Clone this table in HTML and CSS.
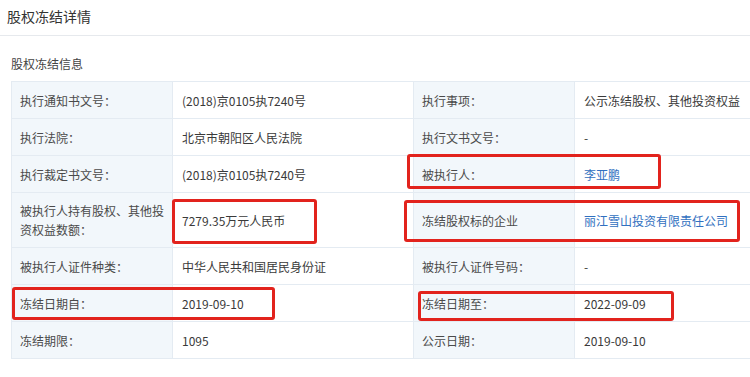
FILE: index.html
```html
<!DOCTYPE html>
<html lang="zh-CN">
<head>
<meta charset="utf-8">
<title>股权冻结详情</title>
<link rel="stylesheet" href="styles.css">
</head>
<body>
<div class="page">
  <header class="head">股权冻结详情</header>
  <h2 class="section">股权冻结信息</h2>
  <div class="table-wrap">
    <table class="info">
      <colgroup>
        <col class="c-label"><col class="c-value"><col class="c-label"><col class="c-value2">
      </colgroup>
      <tr>
        <th>执行通知书文号：</th><td>(2018)京0105执7240号</td>
        <th>执行事项：</th><td>公示冻结股权、其他投资权益</td>
      </tr>
      <tr>
        <th>执行法院：</th><td>北京市朝阳区人民法院</td>
        <th>执行文书文号：</th><td>-</td>
      </tr>
      <tr>
        <th>执行裁定书文号：</th><td>(2018)京0105执7240号</td>
        <th>被执行人：</th><td><a class="link">李亚鹏</a></td>
      </tr>
      <tr class="tall">
        <th>被执行人持有股权、其他投资权益数额：</th><td>7279.35万元人民币</td>
        <th>冻结股权标的企业</th><td><a class="link">丽江雪山投资有限责任公司</a></td>
      </tr>
      <tr>
        <th>被执行人证件种类：</th><td>中华人民共和国居民身份证</td>
        <th>被执行人证件号码：</th><td>-</td>
      </tr>
      <tr>
        <th>冻结日期自：</th><td>2019-09-10</td>
        <th>冻结日期至：</th><td>2022-09-09</td>
      </tr>
      <tr>
        <th>冻结期限：</th><td>1095</td>
        <th>公示日期：</th><td>2019-09-10</td>
      </tr>
    </table>
    <span class="mark mark-person"></span>
    <span class="mark mark-amount"></span>
    <span class="mark mark-company"></span>
    <span class="mark mark-from"></span>
    <span class="mark mark-to"></span>
  </div>
</div>
</body>
</html>
```
FILE: styles.css
```css
html, body {
  margin: 0;
  padding: 0;
  background: #ffffff;
  overflow: hidden;
}
body {
  font-family: "Noto Sans CJK SC", "Noto Sans", "Liberation Sans", sans-serif;
  color: #444;
  width: 750px;
  height: 377px;
}
.page {
  width: 750px;
}
.head {
  font-size: 14px;
  line-height: 20px;
  color: #333;
  padding: 6px 0 9px 7px;
  border-bottom: 1px solid #e6e9ed;
}
.section {
  margin: 0;
  font-size: 12px;
  font-weight: normal;
  color: #444;
  line-height: 18px;
  padding: 19px 0 8px 11px;
}
.table-wrap {
  position: relative;
  margin-left: 11px;
  width: 760px;
}
.info {
  border-collapse: collapse;
  table-layout: fixed;
  width: 760px;
  font-size: 12px;
  color: #444;
}
.c-label { width: 161px; }
.c-value { width: 241px; }
.c-value2 { width: 197px; }
.info th,
.info td {
  height: 36px;
  padding: 0 8px;
  border-top: 1px solid #e4ebf2;
  border-bottom: 1px solid #e4ebf2;
  text-align: left;
  vertical-align: middle;
  font-weight: normal;
  line-height: 19px;
}
.info th {
  background: #f2f7fb;
  border-left: 1px solid #e4ebf2;
  border-right: 1px solid #e4ebf2;
  color: #4a4a4a;
}
.info td {
  padding-left: 9px;
  color: #3a3a3a;
}
.info tr.tall th,
.info tr.tall td {
  height: 54px;
}
.link {
  color: #3170c0;
  text-decoration: none;
}
.mark {
  position: absolute;
  box-sizing: border-box;
  border: 3px solid #e2231d;
  border-radius: 3px;
  pointer-events: none;
}
.mark-person { left: 396px; top: 73px; width: 254px; height: 35px; }
.mark-amount { left: 161px; top: 118px; width: 145px; height: 45px; }
.mark-company { left: 393px; top: 119px; width: 336px; height: 42px; }
.mark-from { left: 1px; top: 206px; width: 263px; height: 33px; }
.mark-to { left: 407px; top: 210px; width: 256px; height: 30px; }
```
